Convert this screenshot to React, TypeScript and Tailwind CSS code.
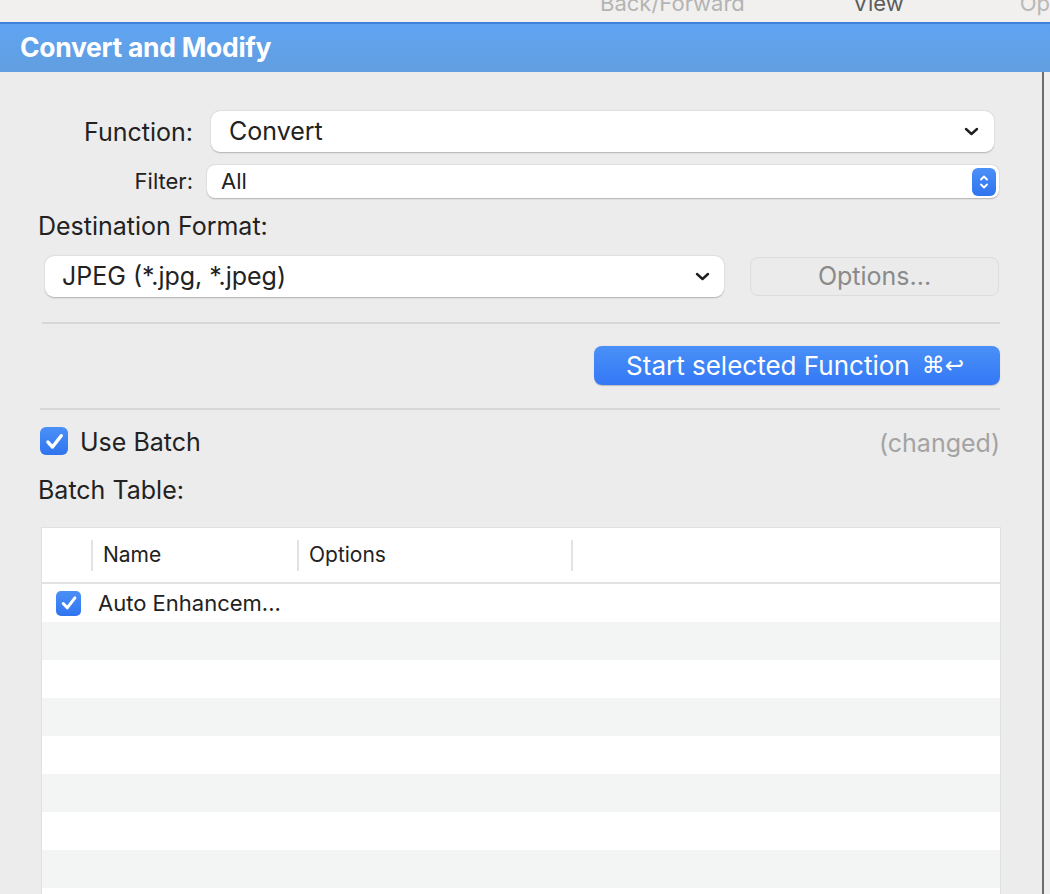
import React from 'react';

const Chevron: React.FC = () => (
    <svg width="15" height="9" viewBox="0 0 15 9" fill="none">
        <path d="M2 2l5.5 5 5.5-5" stroke="#1f1f1f" strokeWidth="2.4" strokeLinecap="round" strokeLinejoin="round" />
    </svg>
);

const Check: React.FC<{ size: number }> = ({ size }) => (
    <svg width={size} height={size} viewBox="0 0 16 16" fill="none">
        <path d="M3.8 8.4l2.9 3.1 5.6-7.2" stroke="white" strokeWidth="2.2" strokeLinecap="round" strokeLinejoin="round" />
    </svg>
);

const ROWS = 9;

const App: React.FC = () => {
    return (
        <div className="w-[1050px] h-[894px] overflow-hidden bg-[#ececec] font-['Inter','Liberation_Sans',sans-serif] text-[#222] flex flex-col">
            {/* toolbar strip, mostly scrolled off */}
            <div className="h-[22px] shrink-0 bg-[#f1f0ef] overflow-hidden flex items-end pl-[600px] text-[22px] leading-[24px] whitespace-nowrap">
                <span className="mb-[7px] text-[#b4b4b4]">Back/Forward</span>
                <span className="mb-[7px] ml-[108px] text-[#5c5c5c]">View</span>
                <span className="mb-[7px] ml-[116px] text-[#b8b8b8]">Options</span>
            </div>

            {/* title bar */}
            <div className="h-[50px] shrink-0 border-t-2 border-[#3f82dc] bg-gradient-to-b from-[#5fa4f3] to-[#629edf] flex items-center px-[20px]">
                <span className="text-white font-bold text-[26.5px] tracking-[-0.3px]">Convert and Modify</span>
            </div>

            <div className="flex flex-1">
                <div className="w-[1042px] flex flex-col">
                    {/* Function */}
                    <div className="mt-[39px] h-[41px] flex items-center">
                        <span className="w-[193px] text-right text-[25px] pt-[3px]">Function:</span>
                        <div className="ml-[18px] w-[783px] h-[41px] bg-white rounded-[9px] shadow-[0_0.5px_1.5px_rgba(0,0,0,0.25)] flex items-center pl-[18px] pr-[15px]">
                            <span className="flex-1 text-[25px]">Convert</span>
                            <Chevron />
                        </div>
                    </div>

                    {/* Filter */}
                    <div className="mt-[13px] h-[33px] flex items-center">
                        <span className="w-[193px] text-right text-[22px]">Filter:</span>
                        <div className="ml-[14px] w-[792px] h-[33px] bg-white rounded-[8px] shadow-[0_0.5px_1.5px_rgba(0,0,0,0.25)] flex items-center pl-[14px] pr-[3px]">
                            <span className="flex-1 text-[22px]">All</span>
                            <div className="w-[24px] h-[28px] rounded-[6px] bg-gradient-to-b from-[#4b90f8] to-[#2f74ee] flex items-center justify-center">
                                <svg width="12" height="18" viewBox="0 0 12 18" fill="none">
                                    <path d="M3 6.5l3-3 3 3M3 11.5l3 3 3-3" stroke="white" strokeWidth="1.8" strokeLinecap="round" strokeLinejoin="round" />
                                </svg>
                            </div>
                        </div>
                    </div>

                    {/* Destination Format */}
                    <div className="mt-[14px] h-[28px] pl-[38px] text-[25px] leading-[28px]">Destination Format:</div>

                    <div className="mt-[16px] flex items-center">
                        <div className="ml-[45px] w-[679px] h-[41px] bg-white rounded-[9px] shadow-[0_0.5px_1.5px_rgba(0,0,0,0.25)] flex items-center pl-[17px] pr-[14px]">
                            <span className="flex-1 text-[25px]">JPEG (*.jpg, *.jpeg)</span>
                            <Chevron />
                        </div>
                        <div className="ml-[26px] w-[249px] h-[39px] rounded-[8px] border border-[#dcdcdc] bg-[#ebebeb] flex items-center justify-center text-[25px] text-[#8a8a8a]">
                            Options...
                        </div>
                    </div>

                    <div className="mt-[25px] ml-[42px] w-[958px] h-[2px] bg-[#d7d7d7]" />

                    {/* Start button */}
                    <div className="mt-[22px] flex justify-end pr-[42px]">
                        <div className="w-[406px] h-[39px] rounded-[8px] bg-gradient-to-b from-[#4a90f7] to-[#3478f5] shadow-[0_0.5px_1px_rgba(0,0,0,0.2)] flex items-center justify-center text-white text-[26px] gap-[12px] pr-[4px]">
                            <span>Start selected Function</span>
                            <span className="font-['DejaVu_Sans',sans-serif] text-[23px]">⌘↩</span>
                        </div>
                    </div>

                    <div className="mt-[23px] ml-[40px] w-[960px] h-[2px] bg-[#d7d7d7]" />

                    {/* Use Batch */}
                    <div className="mt-[16px] h-[30px] flex items-center pl-[40px] pr-[42px]">
                        <div className="w-[28px] h-[28px] rounded-[6px] bg-gradient-to-b from-[#4b90f8] to-[#2f74ee] flex items-center justify-center">
                            <Check size={25} />
                        </div>
                        <span className="ml-[12px] text-[25px] flex-1 pt-[3px]">Use Batch</span>
                        <span className="text-[25px] text-[#a3a3a3] pt-[6px]">(changed)</span>
                    </div>

                    <div className="mt-[20px] h-[28px] pl-[38px] text-[25px] leading-[28px]">Batch Table:</div>

                    {/* Batch table */}
                    <div className="mt-[23px] ml-[41px] w-[960px] flex-1 bg-white border-l border-r border-t border-[#e0e0e0] flex flex-col overflow-hidden">
                        <div className="h-[56px] shrink-0 border-b-2 border-[#e2e2e2] flex items-center text-[21px]">
                            <div className="w-[49px]" />
                            <div className="w-[206px] h-[31px] border-l-2 border-[#e3e3e3] pl-[10px] flex items-center">Name</div>
                            <div className="w-[274px] h-[31px] border-l-2 border-[#e3e3e3] pl-[10px] flex items-center">Options</div>
                            <div className="h-[31px] border-l-2 border-[#e3e3e3]" />
                        </div>
                        {Array.from({ length: ROWS }).map((_, i) => (
                            <div key={i} className={`h-[38px] shrink-0 flex items-center ${i % 2 === 0 ? 'bg-white' : 'bg-[#f3f4f4]'}`}>
                                {i === 0 && (
                                    <>
                                        <div className="ml-[14px] w-[25px] h-[25px] rounded-[5px] bg-gradient-to-b from-[#4b90f8] to-[#2f74ee] flex items-center justify-center">
                                            <Check size={22} />
                                        </div>
                                        <span className="ml-[17px] text-[22px]">Auto Enhancem...</span>
                                    </>
                                )}
                            </div>
                        ))}
                    </div>
                </div>
                <div className="w-[2px] bg-[#6c6c6c]" />
                <div className="flex-1 bg-[#efefef]" />
            </div>
        </div>
    );
};

export default App;
